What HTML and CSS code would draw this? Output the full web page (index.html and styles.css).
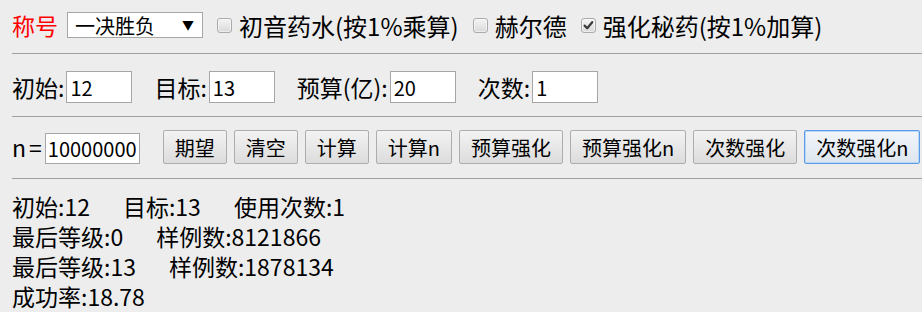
FILE: index.html
```html
<!DOCTYPE html>
<html lang="zh-CN">
<head>
<meta charset="utf-8">
<title>强化模拟</title>
<link rel="stylesheet" href="styles.css">
</head>
<body>
<div class="row row-opts">
  <span class="title">称号</span>
  <span class="select"><span class="select-text">一决胜负</span><span class="select-arrow">▼</span></span>
  <label class="check"><span class="box"></span><span>初音药水(按1%乘算)</span></label>
  <label class="check"><span class="box"></span><span>赫尔德</span></label>
  <label class="check"><span class="box"><svg class="tick" width="15" height="15" viewBox="0 0 15 15"><path d="M3.6 7.6 L6.2 10.2 L11.2 4.2" fill="none" stroke="#3a3a3a" stroke-width="2.2" stroke-linecap="round" stroke-linejoin="round"/></svg></span><span>强化秘药(按1%加算)</span></label>
</div>
<hr class="rule">
<div class="row row-inputs">
  <label class="field">初始:<input class="num" value="12"></label>
  <label class="field">目标:<input class="num" value="13"></label>
  <label class="field">预算(亿):<input class="num" value="20"></label>
  <label class="field">次数:<input class="num" value="1"></label>
</div>
<hr class="rule">
<div class="row row-actions">
  <label class="field field-n"><span class="n-label">n=</span><input class="num num-n" value="10000000"></label>
  <div class="buttons">
    <button class="btn">期望</button>
    <button class="btn">清空</button>
    <button class="btn">计算</button>
    <button class="btn">计算n</button>
    <button class="btn">预算强化</button>
    <button class="btn">预算强化n</button>
    <button class="btn">次数强化</button>
    <button class="btn btn-focus">次数强化n</button>
  </div>
</div>
<hr class="rule rule-last">
<div class="result">
  <div class="line">初始:12<span class="sp"></span>目标:13<span class="sp"></span>使用次数:1</div>
  <div class="line">最后等级:0<span class="sp"></span>样例数:8121866</div>
  <div class="line">最后等级:13<span class="sp"></span>样例数:1878134</div>
  <div class="line">成功率:18.78</div>
</div>
</body>
</html>
```

FILE: styles.css
```css
html, body {
  margin: 0;
  padding: 0;
  background: #ededed;
}
body {
  padding: 11px 0 0 12px;
  font-family: "Noto Sans CJK SC", "Noto Sans", sans-serif;
  font-size: 23px;
  color: #000;
  overflow: hidden;
}
.row {
  display: flex;
  align-items: center;
  white-space: nowrap;
}
.row-opts { height: 28px; }
.title { color: #ff0000; }
.select {
  position: relative;
  display: inline-flex;
  align-items: center;
  box-sizing: border-box;
  width: 136px;
  height: 26px;
  margin-left: 9px;
  padding-left: 7px;
  background: #fff;
  border: 1px solid #a6a6a6;
  font-size: 20px;
}
.select-arrow {
  position: absolute;
  right: 8px;
  top: 4px;
  font-size: 12px;
  line-height: 16px;
}
.check {
  display: inline-flex;
  align-items: center;
  margin-left: 14px;
  font-size: 24px;
}
.box {
  box-sizing: border-box;
  width: 15px;
  height: 15px;
  margin-right: 7px;
  border: 1px solid #ababab;
  border-radius: 3px;
  background: linear-gradient(#f4f4f4, #d9d9d9);
  box-shadow: inset 0 0 0 1px rgba(255,255,255,0.5);
  position: relative;
}
.tick {
  position: absolute;
  left: -1px;
  top: -1px;
}
.rule {
  height: 0;
  margin: 14px 0 17px 0;
  border: none;
  border-top: 1px solid #a0a0a0;
}
.row-inputs { height: 32px; }
.row-inputs + .rule { margin: 13px 0 13px 0; }
.rule-last { margin: 14px 0 12px 0 !important; }
.field {
  display: inline-flex;
  align-items: center;
  margin-right: 22px;
}
.num {
  box-sizing: border-box;
  width: 66px;
  height: 32px;
  margin-left: 2px;
  padding: 0 3px;
  border: 1px solid #a6a6a6;
  background: #fff;
  font-family: "Noto Sans CJK SC", "Noto Sans", sans-serif;
  font-size: 20px;
  color: #000;
  outline: none;
}
.row-actions {
  height: 34px;
  align-items: flex-end;
}
.field-n {
  margin-right: 23px;
  align-self: center;
}
.n-label { letter-spacing: 3px; }
.num-n {
  width: 95px;
  height: 31px;
  margin-left: 0;
  margin-top: 3px;
  padding: 0 2px;
}
.buttons {
  display: flex;
  gap: 7px;
}
.btn {
  box-sizing: border-box;
  height: 34px;
  padding: 0 11px;
  border: 1px solid #adadad;
  border-radius: 2px;
  background: linear-gradient(#f3f3f3, #dcdcdc);
  font-family: "Noto Sans CJK SC", "Noto Sans", sans-serif;
  font-size: 20px;
  color: #000;
}
.btn-focus {
  border-color: #5a9ce6;
  box-shadow: inset 0 0 0 1px #b9d6f5;
  background: linear-gradient(#f2f6fb, #dde6ef);
}
.result {
  line-height: 30px;
}
.line {
  height: 30px;
}
.sp {
  display: inline-block;
  width: 33px;
}
```
